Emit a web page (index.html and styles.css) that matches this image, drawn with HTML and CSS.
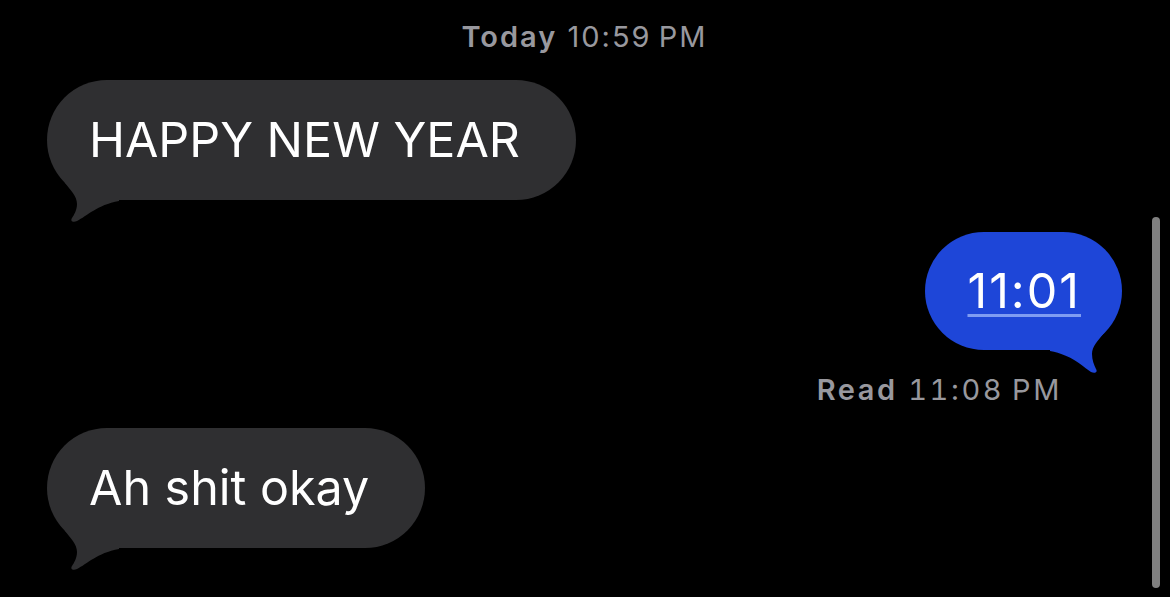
FILE: index.html
```html
<!DOCTYPE html>
<html lang="en">
<head>
    <meta charset="UTF-8">
    <meta name="viewport" content="width=device-width, initial-scale=1.0">
    <title>Messages</title>
    <link rel="stylesheet" href="styles.css">
</head>
<body>

    <div class="thread">
        <div class="stamp"><b>Today</b> 10:59&#8239;PM</div>

        <div class="row in">
            <div class="bubble gray">
                HAPPY NEW YEAR
                <svg class="tail" width="80" height="60" viewBox="0 -30 80 60">
                    <path d="M18 -17 C24 -9 30 -4 30 4 C30 10 27 15 25 18 C23 21 26 23 30 21 C40 16 50 5 72 1 L72 -30 L18 -30 Z"/>
                </svg>
            </div>
        </div>

        <div class="row out">
            <div class="bubble blue">
                <span class="link">11:01</span>
                <svg class="tail" width="80" height="60" viewBox="0 -30 80 60">
                    <path d="M18 -17 C24 -9 30 -4 30 4 C30 10 28 15 26 19 C24 22 27 24 31 22 C40 16 50 5 72 1 L72 -30 L18 -30 Z"/>
                </svg>
            </div>
        </div>

        <div class="receipt"><b>Read</b> 11:08&#8239;PM</div>

        <div class="row in">
            <div class="bubble gray">
                Ah shit okay
                <svg class="tail" width="80" height="60" viewBox="0 -30 80 60">
                    <path d="M18 -17 C24 -9 30 -4 30 4 C30 10 27 15 25 18 C23 21 26 23 30 21 C40 16 50 5 72 1 L72 -30 L18 -30 Z"/>
                </svg>
            </div>
        </div>
    </div>

    <div class="scrollbar"></div>

</body>
</html>
```

FILE: styles.css
```css
body {
    margin: 0;
    height: 597px;
    overflow: hidden;
    background-color: #000;
    font-family: Inter, "Noto Sans", sans-serif;
    color: #fff;
}

.thread {
    display: flex;
    flex-direction: column;
    padding: 20px 48px 0 47px;
}

.stamp {
    text-align: center;
    font-size: 29px;
    line-height: 34px;
    letter-spacing: 2px;
    color: #98989e;
}

.stamp b,
.receipt b {
    font-weight: 600;
}

.row {
    display: flex;
}

.row.in {
    justify-content: flex-start;
    margin-top: 26px;
}

.row.out {
    justify-content: flex-end;
    margin-top: 32px;
}

.receipt + .row.in {
    margin-top: 21px;
}

.bubble {
    position: relative;
    z-index: 0;
    font-size: 48.4px;
    line-height: 60px;
    padding: 30px 56px 30px 42px;
    border-radius: 60px;
    white-space: nowrap;
}

.bubble .tail {
    position: absolute;
    z-index: -1;
    bottom: -30px;
    left: 0;
}

.gray {
    background-color: #2f2f31;
}

.gray .tail path {
    fill: #2f2f31;
}

.blue {
    background-color: #1e46d8;
    padding: 29px 41px 29px 42px;
}

.blue .tail {
    left: auto;
    right: 0;
    transform: scaleX(-1);
}

.blue .tail path {
    fill: #1e46d8;
}

.link {
    letter-spacing: 2px;
    text-decoration: underline;
    text-decoration-color: #7f9cf2;
    text-decoration-thickness: 3px;
    text-underline-offset: 6px;
}

.receipt {
    align-self: flex-end;
    margin: 23px 60px 0 0;
    font-size: 29px;
    line-height: 34px;
    letter-spacing: 2.6px;
    font-variant-numeric: tabular-nums;
    color: #98989e;
}

.scrollbar {
    position: absolute;
    top: 217px;
    left: 1152px;
    width: 8px;
    height: 371px;
    border-radius: 4px;
    background-color: #808080;
}
```
